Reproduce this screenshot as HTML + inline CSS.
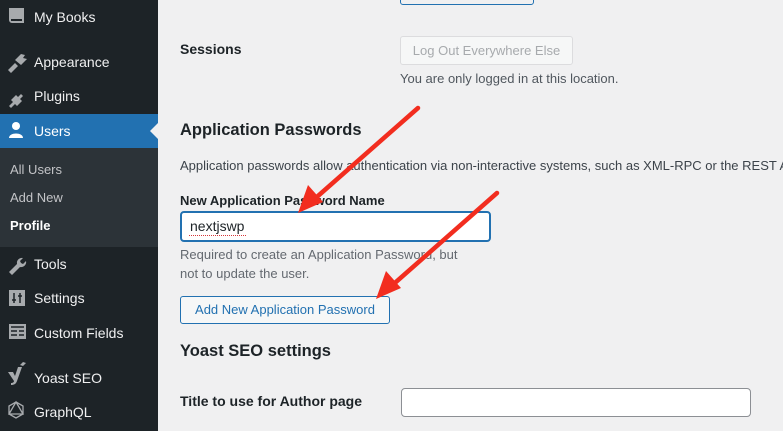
<!DOCTYPE html>
<html><head><style>
*{margin:0;padding:0;box-sizing:border-box}
html,body{width:783px;height:431px;overflow:hidden}
body{background:#f0f0f1;font-family:"Liberation Sans",sans-serif;position:relative;color:#1d2327}
#w{position:absolute;left:0;top:0;width:783px;height:431px;overflow:hidden}
.sb{position:absolute;left:0;top:0;width:158px;height:431px;background:#1d2327}
.a{position:absolute;font-size:14px;color:#f0f0f1;white-space:nowrap}
.t{position:absolute;white-space:nowrap}
</style></head><body><div id="w">
<div class="sb"></div>
<div style="position:absolute;left:0;top:114px;width:158px;height:34px;background:#2271b1"></div>
<div style="position:absolute;left:150px;top:123px;width:0;height:0;border-top:8px solid transparent;border-bottom:8px solid transparent;border-right:8px solid #f0f0f1"></div>
<div style="position:absolute;left:0;top:148px;width:158px;height:99px;background:#2c3338"></div>
<svg style="position:absolute;left:0;top:0" width="158" height="431">
<g fill="#a7aaad">
<path d="M9 8h15v15H12a3 3 0 0 1-3-3z M11 19h11v2H11z" fill-rule="evenodd"/>
<path d="M8 70l7-7 3 3-7 7zM15 60l6-6 4 1-2 3 4 1-6 6z"/>
<path d="M9 106l4-4 -2-2 5-5 2 2 3-3 2 2-3 3 2 2-5 5-2-2-4 4z"/>
<path d="M9 272l8-8a5 5 0 0 1 6-6l-3 3 1 2 2 1 3-3a5 5 0 0 1-6 6l-8 8z"/>
<path d="M9 290h16v16H9z"/>
<path d="M9 324h17v15H9z"/>
<path d="M8 372l5 0 2 4 3-9 4 0-5 14c-1 3-3 4-6 4v-2c2 0 3-1 3-2zM20 365l3 -3 3 1-3 3z"/>
</g>
<g stroke="#1d2327" stroke-width="1.5" fill="none"><path d="M14 293v10M20 293v10M12 300h4M18 296h4"/><path d="M11 327h13M11 331h6M19 331h5M11 335h6M19 335h5"/></g>
<circle cx="16" cy="126" r="4" fill="#fff"/>
<path d="M9 138c0-6 14-6 14 0z" fill="#fff"/>
<g stroke="#a7aaad" stroke-width="1.3" fill="none"><path d="M16 402l7 4v8l-7 4-7-4v-8z M16 402l7 12H9z"/></g>
</svg>
<div class="a" style="left:34px;top:9px">My Books</div>
<div class="a" style="left:34px;top:54px">Appearance</div>
<div class="a" style="left:34px;top:88px">Plugins</div>
<div class="a" style="left:34px;top:123px;color:#fff">Users</div>
<div class="a" style="left:10px;top:162px;font-size:13px;color:#c3c4c7">All Users</div>
<div class="a" style="left:10px;top:190px;font-size:13px;color:#c3c4c7">Add New</div>
<div class="a" style="left:10px;top:218px;font-size:13px;color:#fff;font-weight:bold">Profile</div>
<div class="a" style="left:34px;top:256px">Tools</div>
<div class="a" style="left:34px;top:290px">Settings</div>
<div class="a" style="left:34px;top:325px">Custom Fields</div>
<div class="a" style="left:34px;top:370px">Yoast SEO</div>
<div class="a" style="left:34px;top:404px">GraphQL</div>

<div style="position:absolute;left:400px;top:-4px;width:134px;height:9px;border:1px solid #2271b1;border-radius:3px"></div>
<div class="t" style="left:180px;top:41px;font-size:14px;font-weight:bold">Sessions</div>
<div style="position:absolute;left:400px;top:36px;width:173px;height:29px;border:1px solid #dcdcde;border-radius:3px;background:#f6f7f7;color:#a7aaad;font-size:13px;line-height:27px;text-align:center">Log Out Everywhere Else</div>
<div class="t" style="left:400px;top:71px;font-size:13px;color:#50575e">You are only logged in at this location.</div>
<div class="t" style="left:180px;top:121px;font-size:16.5px;font-weight:bold">Application Passwords</div>
<div style="position:absolute;left:180px;top:158px;width:603px;overflow:hidden;white-space:nowrap;font-size:13px;color:#3c434a">Application passwords allow authentication via non-interactive systems, such as XML-RPC or the REST API.</div>
<div class="t" style="left:180px;top:193px;font-size:13px;font-weight:bold">New Application Password Name</div>
<div style="position:absolute;left:180px;top:211px;width:311px;height:31px;border:2px solid #2271b1;border-radius:4px;background:#fff;font-size:14px;padding:5px 8px">nextjswp</div>
<div style="position:absolute;left:189px;top:235px;width:57px;border-top:1px dotted #d63638"></div>
<div class="t" style="left:180px;top:245px;font-size:13px;color:#646970;line-height:19px">Required to create an Application Password, but<br>not to update the user.</div>
<div style="position:absolute;left:180px;top:296px;width:210px;height:28px;border:1px solid #2271b1;border-radius:3px;background:#f6f7f7;color:#2271b1;font-size:13px;line-height:26px;text-align:center">Add New Application Password</div>
<div class="t" style="left:180px;top:342px;font-size:16.5px;font-weight:bold">Yoast SEO settings</div>
<div class="t" style="left:180px;top:393px;font-size:14px;font-weight:bold">Title to use for Author page</div>
<div style="position:absolute;left:401px;top:388px;width:350px;height:29px;border:1px solid #8c8f94;border-radius:4px;background:#fff"></div>

<svg style="position:absolute;left:0;top:0" width="783" height="431">
<g stroke="#f22d1f" stroke-width="4.5" stroke-linecap="round"><line x1="418" y1="108" x2="310" y2="203"/><line x1="497" y1="193" x2="388" y2="289"/></g>
<g fill="#f22d1f"><path d="M298 213l10-28 15 17z"/><path d="M376 299l10-28 15 17z"/></g>
</svg>
</div></body></html>
